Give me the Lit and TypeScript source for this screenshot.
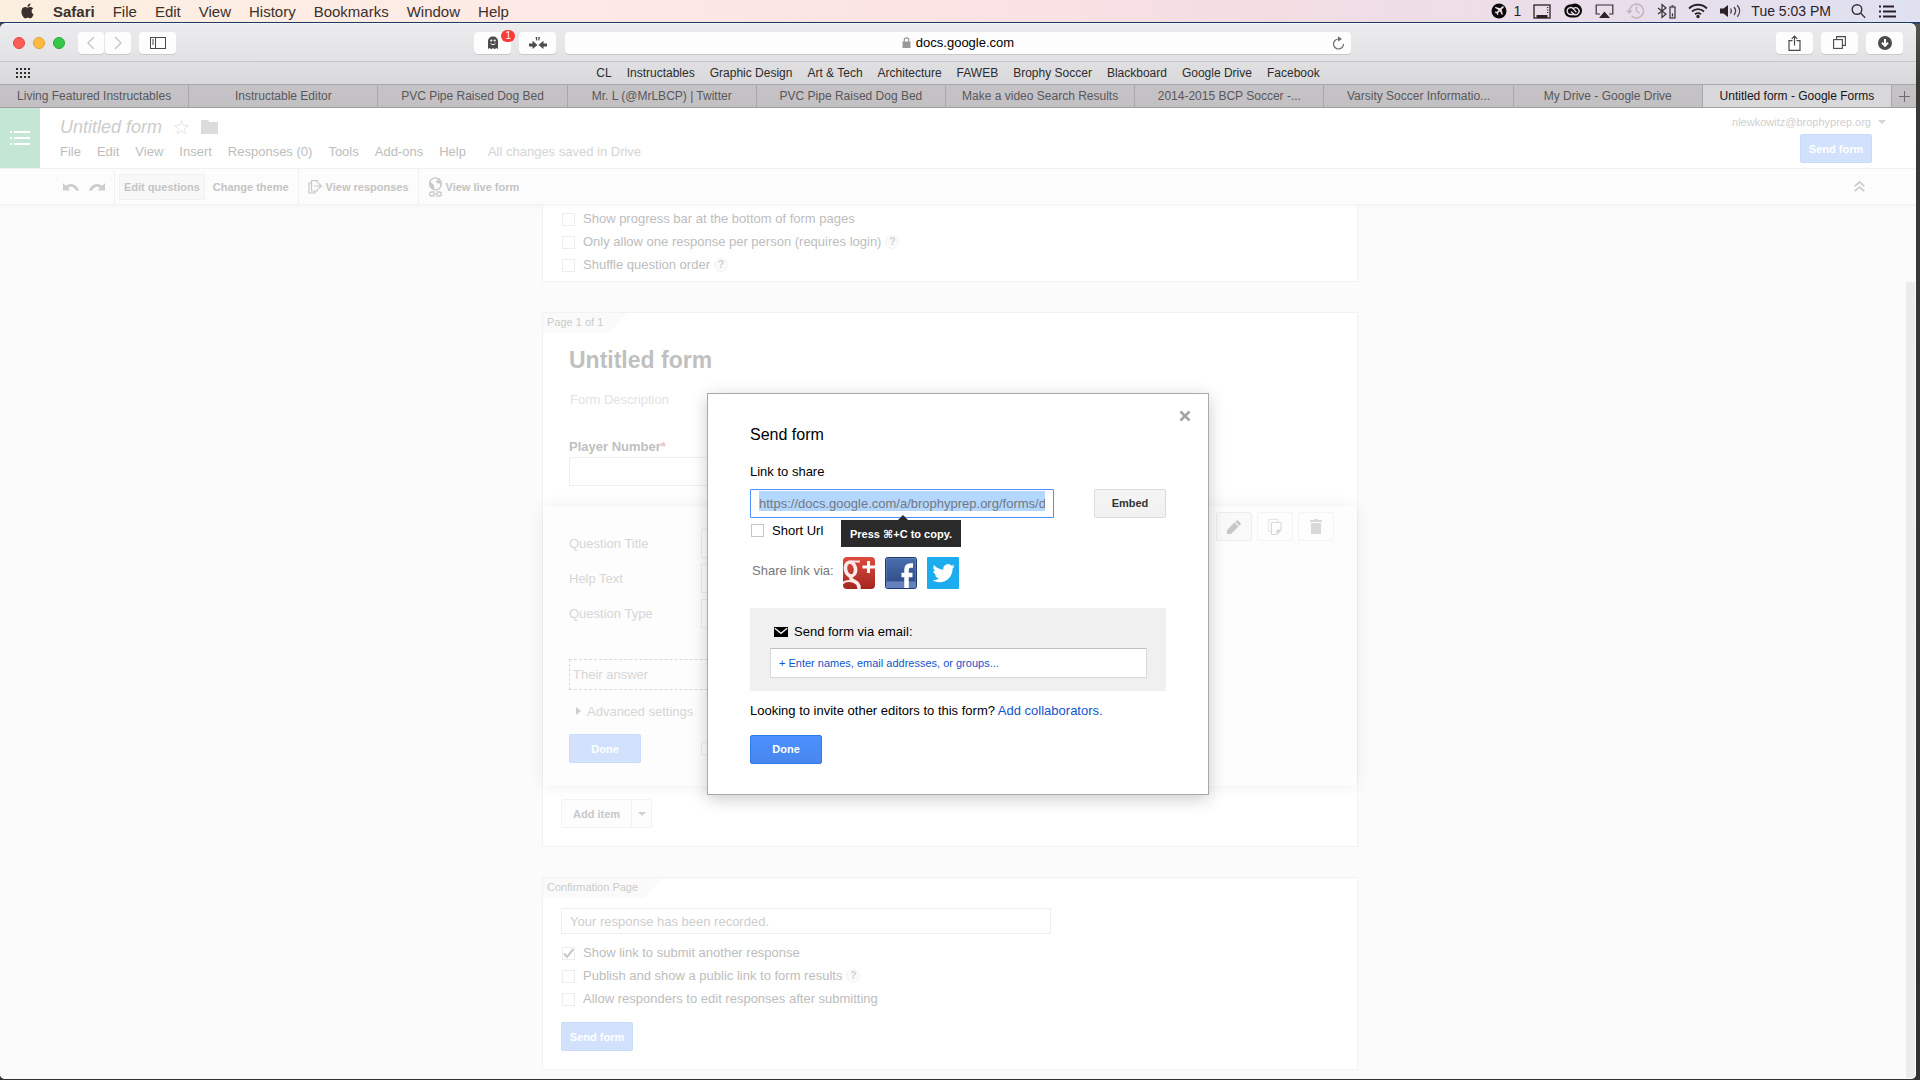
import { LitElement, html, css, svg } from "lit";
import { customElement, property } from "lit/decorators.js";
import { classMap } from "lit/directives/class-map.js";

const base = css`
  :host, * { box-sizing: border-box; }
  button, input, select {
    font: inherit;
    color: inherit;
    margin: 0;
    padding: 0;
    border: 0;
    border-radius: 0;
    background: none;
    outline: none;
    appearance: none;
    text-align: left;
  }
  a { color: inherit; text-decoration: none; }
  svg { display: block; flex: none; }
  h1, h2, p { margin: 0; font-weight: normal; }
`;

const formControls = css`
  .primary {
    width: 72px;
    height: 29px;
    border: 1px solid #c9dcfb;
    border-radius: 2px;
    background: #d2e2fd;
    color: #fff;
    font-size: 11px;
    font-weight: bold;
    text-align: center;
  }
  .check {
    flex: none;
    width: 13px;
    height: 13px;
    border: 1px solid #ededed;
    background: #fff;
  }
`;

/* macOS menu bar */
@customElement("menu-bar")
export class MenuBar extends LitElement {
  static styles = [base, css`
    :host {
      display: flex;
      align-items: center;
      justify-content: space-between;
      height: 22px;
      padding: 0 23px 0 20px;
      color: #3c302c;
      font-size: 15px;
      background: linear-gradient(90deg, #fbefdf 0%, #fdeae6 26%, #fbe2e4 52%, #f3dde3 66%, #eadeea 82%, #dfe1f1 100%);
    }
    .menus { display: flex; align-items: center; gap: 18px; }
    .name { font-weight: bold; }
    .status { display: flex; align-items: center; gap: 12px; font-size: 14px; color: #2d2228; }
    .count { display: flex; align-items: center; gap: 7px; }
    .clock { margin: 0 8px 0 -2px; }
  `];
  render() {
    return html`
      <nav class="menus">
        <svg width="15" height="17" viewBox="0 1 24 24" fill="currentColor"><path d="M12.152 6.896c-.948 0-2.415-1.078-3.96-1.04-2.04.027-3.91 1.183-4.961 3.014-2.117 3.675-.546 9.103 1.519 12.09 1.013 1.454 2.208 3.09 3.792 3.039 1.52-.065 2.09-.987 3.935-.987 1.831 0 2.35.987 3.96.948 1.637-.026 2.676-1.48 3.676-2.948 1.156-1.688 1.636-3.325 1.662-3.415-.039-.013-3.182-1.221-3.22-4.857-.026-3.04 2.48-4.494 2.597-4.559-1.429-2.09-3.623-2.324-4.39-2.376-2-.156-3.675 1.09-4.61 1.09zM15.53 3.83c.843-1.012 1.4-2.427 1.245-3.83-1.207.052-2.662.805-3.532 1.818-.78.896-1.454 2.338-1.273 3.714 1.338.104 2.715-.688 3.559-1.701"/></svg>
        <button class="name">Safari</button>
        ${["File", "Edit", "View", "History", "Bookmarks", "Window", "Help"].map((m) => html`<button>${m}</button>`)}
      </nav>
      <div class="status">
        <span class="count">
          <svg width="16" height="16" viewBox="0 0 16 16"><circle cx="8" cy="8" r="7.5" fill="#0d0a0c"/><path d="M12.6 3.4c-.5-.5-1.3-.2-1.8.3L9.3 5.2 4.6 4l-.9.8 3.9 2.1-1.7 1.8-1.6-.2-.8.7 2 1.1 1.1 2 .7-.8-.2-1.6 1.8-1.7 2.1 3.9.8-.9-1.2-4.7 1.5-1.5c.5-.5 1-1.1 .5-1.6z" fill="#f3e2e8"/></svg>
          <span>1</span>
        </span>
        <svg width="18" height="16" viewBox="0 0 18 16"><rect x="1" y="2" width="16" height="13" fill="none" stroke="#2b2126" stroke-width="1.3"/><rect x="3.5" y="12" width="11" height="3" fill="#2b2126"/><path d="M14 4.5h1.3M14 7h1.3M14 9.5h1.3" stroke="#2b2126"/></svg>
        <svg width="20" height="16" viewBox="0 0 20 16"><path d="M7.3 14.5A6.6 6.6 0 0 1 5.5 1.8 7 7 0 0 1 9 1.2a7 7 0 1 1 3.5 13.3z" fill="#0d0a0c"/><path d="M12.500 11.500H7.500a3.500 3.500 0 1 1 2.600-6l3.300 3.900M8 8.500l3 2.800a3.500 3.500 0 1 0-.6-5.800" fill="none" stroke="#f0e0e8" stroke-width="1.300"/></svg>
        <svg width="19" height="16" viewBox="0 0 19 16"><path d="M5 11H1.200V2h16.600v9H14" fill="none" stroke="#3a2f35" stroke-width="1.200"/><path d="M9.500 8.500 15 15H4z" fill="#2b2126"/></svg>
        <svg width="19" height="16" viewBox="0 0 19 16" fill="none" stroke="#c2b3bd" stroke-width="1.400"><path d="M3.500 8A7 7 0 1 1 5.600 13M10.500 3.500V8l3 2.200"/><path d="M0 7.500h6.500L3.300 11z" fill="#c2b3bd" stroke="none"/></svg>
        <svg width="19" height="16" viewBox="0 0 19 16" fill="none" stroke="#3a2f35" stroke-width="1.200"><path d="M1 5l8 6-4 3.500v-13L9 5l-8 6"/><rect x="13" y="4" width="5" height="11"/><path d="M14.500 2.800h2M15.500 10.500v3"/></svg>
        <svg width="20" height="16" viewBox="0 0 20 16" fill="none" stroke="#2b2126" stroke-width="1.800"><path d="M1 5.500c5-5 13-5 18 0M4 8.500c3.500-3.300 8.500-3.300 12 0M7 11.300c2-1.600 4-1.600 6 0"/><circle cx="10" cy="13.500" r=".8"/></svg>
        <svg width="21" height="16" viewBox="0 0 21 16"><path d="M0 5.500h3.500L8 2v12l-4.500-3.500H0z" fill="#2b2126"/><path d="M10.500 5.500c1 1.500 1 3.500 0 5M14 4c2 2.500 2 5.500 0 8M17.300 2.300c3 3.400 3 8 0 11.400" fill="none" stroke="#4b3f46" stroke-width="1.300"/></svg>
        <span class="clock">Tue 5:03 PM</span>
        <svg width="15" height="16" viewBox="0 0 15 16" fill="none" stroke="#3a3038" stroke-width="1.400"><circle cx="6" cy="6.500" r="4.800"/><path d="M9.500 10l4.700 4.800"/></svg>
        <svg width="19" height="16" viewBox="0 0 19 16" stroke="#2b2126" stroke-width="2"><path d="M1 3.500h2M1 8.500h2M1 13.500h2M5 3.500h11M5 8.500h13M5 13.500h13"/></svg>
      </div>`;
  }
}

/* Safari toolbar, favourites and tabs */
@customElement("browser-chrome")
export class BrowserChrome extends LitElement {
  static styles = [base, css`
    :host { display: block; color: #2c2c2c; font-size: 12px; }
    .bar {
      display: grid;
      grid-template-columns: 1fr 41% 1fr;
      align-items: center;
      height: 38px;
      background: linear-gradient(#ecebed, #e2e1e3);
      border-radius: 6px 6px 0 0;
      border-top: 1px solid #f4f4f5;
    }
    .side { display: flex; align-items: center; justify-content: space-between; padding: 0 9px 0 13px; }
    .side.end { justify-content: flex-end; gap: 8px; padding: 0 13px; }
    .set { display: flex; align-items: center; gap: 8px; }
    .lights { display: flex; gap: 8px; }
    .light { width: 12px; height: 12px; border-radius: 50%; border: 1px solid #e2463f; background: #fc5b57; }
    .light.amber { border-color: #dfa033; background: #fdbc40; }
    .light.green { border-color: #27aa35; background: #34c84a; }
    .pair { display: flex; gap: 1px; margin-left: 5px; }
    .key {
      display: grid;
      place-items: center;
      width: 37px;
      height: 22px;
      border-radius: 4px;
      background: #fdfdfd;
      box-shadow: 0 1px 0 #c9c8ca;
      position: relative;
    }
    .pair .key { width: 26px; }
    .badge {
      position: absolute;
      top: -2px;
      right: -4px;
      width: 14px;
      height: 12px;
      border-radius: 6px;
      background: #fc3a38;
      color: #fff;
      font-size: 10px;
      line-height: 12px;
      text-align: center;
    }
    .url {
      display: grid;
      grid-template-columns: 1fr auto 1fr;
      align-items: center;
      height: 22px;
      padding: 0 6px;
      border-radius: 4px;
      background: #fdfdfd;
      box-shadow: 0 1px 0 #c9c8ca;
      color: #000;
      font-size: 13px;
    }
    .address { display: flex; align-items: center; gap: 5px; grid-column: 2; }
    .reload { justify-self: end; }
    .favs {
      display: grid;
      grid-template-columns: 1fr auto 1fr;
      align-items: center;
      height: 23px;
      padding: 0 16px;
      border-top: 1px solid #c6c5c7;
      background: linear-gradient(#e0dfe1, #d9d8da);
    }
    .links { display: flex; gap: 15px; }
    .tabs {
      display: flex;
      height: 24px;
      border-top: 1px solid #a9a7aa;
      border-bottom: 1px solid #a09ea1;
      background: linear-gradient(#c5c3c6, #c2c0c3);
      color: #59575a;
    }
    .tab {
      flex: 1;
      min-width: 0;
      border-right: 1px solid #aaa8ab;
      line-height: 22px;
      text-align: center;
    }
    .tab.active { background: #d8d7d9; color: #161616; }
    .add { display: grid; place-items: center; width: 24px; }
  `];
  private tabs = ["Living Featured Instructables", "Instructable Editor", "PVC Pipe Raised Dog Bed", "Mr. L (@MrLBCP) | Twitter", "PVC Pipe Raised Dog Bed", "Make a video Search Results", "2014-2015 BCP Soccer -...", "Varsity Soccer Informatio...", "My Drive - Google Drive", "Untitled form - Google Forms"];
  private favs = ["CL", "Instructables", "Graphic Design", "Art & Tech", "Architecture", "FAWEB", "Brophy Soccer", "Blackboard", "Google Drive", "Facebook"];
  render() {
    return html`
      <div class="bar">
        <div class="side">
          <div class="set">
            <div class="lights">
              <button class="light" aria-label="Close"></button>
              <button class="light amber" aria-label="Minimize"></button>
              <button class="light green" aria-label="Zoom"></button>
            </div>
            <div class="pair">
              <button class="key" aria-label="Back"><svg width="8" height="14" viewBox="0 0 8 14" fill="none" stroke="#c9c9c9" stroke-width="1.500"><path d="M7 1 1 7l6 6"/></svg></button>
              <button class="key" aria-label="Forward"><svg width="8" height="14" viewBox="0 0 8 14" fill="none" stroke="#c9c9c9" stroke-width="1.500"><path d="M1 1l6 6-6 6"/></svg></button>
            </div>
            <button class="key" aria-label="Sidebar"><svg width="16" height="12" viewBox="0 0 16 12" fill="none" stroke="#4a4a4a"><rect x=".5" y=".5" width="15" height="11"/><path d="M5.500 1v10M2 3h2M2 5h2M2 7h2"/></svg></button>
          </div>
          <div class="set">
            <button class="key" aria-label="Ghostery">
              <svg width="12" height="14" viewBox="0 0 12 14"><path d="M1 13V5.500C1 2.500 3 .5 6 .5s5 2 5 5V13l-1.700-1-1.600 1.200L6 12l-1.700 1.200L2.700 12z" fill="#4c4c4c"/><circle cx="4.300" cy="4.500" r="1.100" fill="#fff"/><circle cx="7.700" cy="4.500" r="1.100" fill="#fff"/><path d="M3.500 7.200c1.500 1.900 3.500 1.900 5 0" fill="none" stroke="#fff"/></svg>
              <span class="badge">1</span>
            </button>
            <button class="key" aria-label="Pin"><svg width="18" height="12" viewBox="0 0 18 12" fill="#4c4c4c"><path d="M0 6.500h3.500V3.700L8.500 8l-5 4V9.500H0zM18 6.500h-3.500V3.700L9.500 8l5 4V9.500H18zM6.500 0h1.700v3.500H7.300zM9.300 0H11l-.8 3.500h-.9z"/></svg></button>
          </div>
        </div>
        <div class="url">
          <span class="address">
            <svg width="9" height="11" viewBox="0 0 9 11"><rect x=".5" y="4.500" width="8" height="6.500" fill="#999"/><path d="M2.300 5V3a2.200 2.200 0 0 1 4.400 0v2" fill="none" stroke="#999" stroke-width="1.200"/></svg>
            docs.google.com
          </span>
          <button class="reload" aria-label="Reload"><svg width="13" height="14" viewBox="0 0 13 14"><path d="M6.500 3A5 5 0 1 0 11.500 8" fill="none" stroke="#6b6b6b" stroke-width="1.200"/><path d="M6 .3v5.200l4-2.500z" fill="#6b6b6b"/></svg></button>
        </div>
        <div class="side end">
          <button class="key" aria-label="Share"><svg width="13" height="16" viewBox="0 0 13 16" fill="none" stroke="#4a4a4a" stroke-width="1.200"><path d="M4.500 5.600H1v9.800h11V5.600H8.500M6.500 10.500V1M3.700 3.800 6.500 1l2.800 2.800"/></svg></button>
          <button class="key" aria-label="Show all tabs"><svg width="13" height="13" viewBox="0 0 13 13" fill="none" stroke="#4a4a4a" stroke-width="1.100"><rect x=".6" y="3.600" width="8.800" height="8.800"/><path d="M3.600 3.500V.6h8.800v8.800H9.500"/></svg></button>
          <button class="key" aria-label="Downloads"><svg width="14" height="14" viewBox="0 0 14 14"><circle cx="7" cy="7" r="7" fill="#4c4c4c"/><path d="M7 3v6M4 6.700 7 9.900l3-3.200" fill="none" stroke="#fff" stroke-width="2"/></svg></button>
        </div>
      </div>
      <div class="favs">
        <svg width="14" height="11" viewBox="0 0 14 11" fill="#2c2c2c">${[0, 4, 8, 12].map((x) => [0, 4, 8].map((y) => svg`<rect x=${x} y=${y} width="2" height="2"/>`))}</svg>
        <nav class="links">${this.favs.map((f) => html`<a href="#">${f}</a>`)}</nav>
      </div>
      <nav class="tabs">
        ${this.tabs.map((t, i) => html`<a href="#" class=${classMap({ tab: true, active: i === 9 })}>${t}</a>`)}
        <button class="add" aria-label="New tab"><svg width="11" height="11" viewBox="0 0 11 11" stroke="#6c6a6d"><path d="M5.500 0v11M0 5.500h11"/></svg></button>
      </nav>`;
  }
}

/* Google Forms title, menus and toolbar */
@customElement("forms-header")
export class FormsHeader extends LitElement {
  static styles = [base, formControls, css`
    :host { display: block; font-size: 13px; color: #bdbdbd; }
    .top { display: flex; height: 61px; background: #fff; border-bottom: 1px solid #f2f2f2; }
    .home { display: grid; place-items: center; width: 40px; height: 60px; background: #c3e7d4; }
    .main { flex: 1; padding: 7px 0 0 20px; }
    .title { display: flex; align-items: center; gap: 11px; height: 24px; }
    .title h1 { font-size: 18px; font-style: italic; color: #ccc; }
    .menus { display: flex; gap: 16px; line-height: 20px; padding-top: 3px; }
    .saved { color: #d4d4d4; margin-left: 6px; }
    .account { display: flex; flex-direction: column; align-items: flex-end; gap: 4px; padding: 6px 30px 0 0; }
    .user { display: flex; align-items: center; gap: 7px; font-size: 11px; line-height: 16px; color: #cfcfcf; }
    .account .primary { margin-right: 14px; }
    .tools {
      display: flex;
      height: 36px;
      background: #fcfcfc;
      border-bottom: 1px solid #f2f2f2;
      box-shadow: 0 1px 4px rgba(0, 0, 0, 0.04);
      position: relative;
      font-size: 11px;
      font-weight: bold;
      color: #c4c4c4;
    }
    .group { display: flex; align-items: center; padding: 0 9px; border-left: 1px solid #f1f1f1; }
    .group.history { gap: 10px; padding: 0 9px 0 63px; border: 0; }
    .group.edit { padding: 0 9px 0 4px; gap: 8px; }
    .tool { display: flex; align-items: center; gap: 3px; height: 26px; }
    .tool.on { padding: 0 4px; border: 1px solid #f1f1f1; background: #f8f8f8; }
    .fold { margin: auto 51px auto auto; }
  `];
  render() {
    return html`
      <header class="top">
        <a class="home" href="#" aria-label="Forms home"><svg width="22" height="16" viewBox="0 0 22 16" stroke="#fff" stroke-width="2"><path d="M1 2h2M1 8h2M1 14h2M5 2h16M5 8h16M5 14h16"/></svg></a>
        <div class="main">
          <div class="title">
            <h1>Untitled form</h1>
            <svg width="17" height="16" viewBox="0 0 17 16" fill="none" stroke="#e6e6e6"><path d="M8.500 1.500l1.800 4.800 5.200.2-4.100 3.200 1.500 5-4.400-2.900-4.400 2.900 1.500-5L1.500 6.500l5.200-.2z"/></svg>
            <svg width="17" height="14" viewBox="0 0 17 14" fill="#dcdcdc"><path d="M0 1.500Q0 0 1.500 0H7l1.500 2H17v12H0z"/></svg>
          </div>
          <nav class="menus">
            ${["File", "Edit", "View", "Insert", "Responses (0)", "Tools", "Add-ons", "Help"].map((m) => html`<button>${m}</button>`)}
            <span class="saved">All changes saved in Drive</span>
          </nav>
        </div>
        <div class="account">
          <button class="user">nlewkowitz@brophyprep.org<svg width="8" height="4" viewBox="0 0 8 4" fill="#d4d4d4"><path d="M0 0h8L4 4z"/></svg></button>
          <button class="primary">Send form</button>
        </div>
      </header>
      <div class="tools">
        <div class="group history">
          <button aria-label="Undo"><svg width="16" height="10" viewBox="0 0 16 10" fill="#cdcdcd"><path d="M0 1v7.500h7.500L5 6c2.500-2 6-1.500 8 2.800h3C14 1.500 7 .5 2.700 3.700z"/></svg></button>
          <button aria-label="Redo"><svg width="16" height="10" viewBox="0 0 16 10" fill="#cdcdcd"><path d="M16 1v7.500H8.500L11 6C8.500 4 5 4.500 3 8.800H0C2 1.500 9 .5 13.300 3.700z"/></svg></button>
        </div>
        <div class="group edit">
          <button class="tool on">Edit questions</button>
          <button class="tool">Change theme</button>
        </div>
        <div class="group">
          <button class="tool"><svg width="15" height="14" viewBox="0 0 15 14" fill="none" stroke="#c8c8c8" stroke-width="1.200"><path d="M9.300 3.200V.7H3.500V11h5.800V8.700M3 3H1v10h6v-2M5.500 6h8M10.500 3.300 13.300 6l-2.800 2.700"/></svg>View responses</button>
        </div>
        <div class="group">
          <button class="tool"><svg width="15" height="20" viewBox="0 0 15 20" fill="none" stroke="#c8c8c8" stroke-width="1.300"><circle cx="7.500" cy="6.800" r="6"/><path d="M2 4.500l3.500 3 1 2.500-.5 2.500C3 12 1.500 9 2 4.500zM6 1l3 .5 1 1.500L7.500 5l1.500 1 2.500.5 1 2.500C14 6 12 1 6 1z" fill="#c8c8c8" stroke="none"/><path d="M6.500 15H3.600a2 2 0 0 0 0 4h2.900M8.500 15h2.900a2 2 0 0 1 0 4H8.500M5 17h5"/></svg>View live form</button>
        </div>
        <button class="fold" aria-label="Hide menus"><svg width="11" height="11" viewBox="0 0 11 11" fill="none" stroke="#c4c4c4" stroke-width="1.500"><path d="M.7 5.300l4.800-4.300 4.800 4.300M.7 10.300l4.800-4.300 4.800 4.300"/></svg></button>
      </div>`;
  }
}

/* Tick box with its label and an optional help mark */
@customElement("option-row")
export class OptionRow extends LitElement {
  @property() label = "";
  @property({ type: Boolean }) help = false;
  @property({ type: Boolean }) checked = false;
  static styles = [base, formControls, css`
    :host { display: flex; align-items: center; gap: 4px; height: 23px; }
    .row { display: flex; align-items: center; gap: 8px; }
    .check:checked { background: #fff url("data:image/svg+xml,%3Csvg xmlns='http://www.w3.org/2000/svg' viewBox='0 0 11 11'%3E%3Cpath d='M1 5.500 4 9 10.500 1' fill='none' stroke='%23c8c8c8' stroke-width='2'/%3E%3C/svg%3E"); }
    .check { margin-top: 1px; }
    .mark {
      width: 14px;
      height: 14px;
      border-radius: 50%;
      border: 1px solid #f3f3f3;
      background: #fafafa;
      color: #d0d0d0;
      font-size: 10px;
      font-weight: bold;
      line-height: 12px;
      text-align: center;
    }
  `];
  render() {
    return html`
      <label class="row"><input class="check" type="checkbox" .checked=${this.checked} />${this.label}</label>
      ${this.help ? html`<button class="mark" aria-label="Help">?</button>` : ""}`;
  }
}

/* Form being edited */
@customElement("form-editor")
export class FormEditor extends LitElement {
  static styles = [base, formControls, css`
    :host { display: flex; min-height: 0; font-size: 13px; color: #bdbdbd; background: #fbfbfb; }
    .sheet { flex: 1; display: flex; flex-direction: column; align-items: center; gap: 30px; min-height: 0; overflow: hidden; }
    .card { flex: none; width: 100%; max-width: 816px; border: 1px solid #f2f2f2; background: #fff; }
    .card.settings { border-top: 0; padding: 2px 19px 5px; }
    .flag {
      width: fit-content;
      height: 20px;
      padding: 0 24px 0 4px;
      background: #fafafa;
      clip-path: polygon(0 0, 100% 0, calc(100% - 18px) 100%, 0 100%);
      font-size: 11px;
      line-height: 19px;
      color: #cbcbcb;
    }
    .intro { padding: 13px 26px 20px; }
    .intro h2 { font-size: 23px; line-height: 28px; font-weight: bold; color: #c0c0c0; }
    .desc { padding: 16px 1px 27px; line-height: 20px; color: #e3e3e3; }
    .name { display: block; line-height: 20px; font-weight: bold; color: #c0c0c0; }
    .star { color: #f3c4c0; }
    .text { display: block; width: 400px; height: 29px; padding: 0 8px; border: 1px solid #efefef; background: #fff; }
    .question {
      display: flex;
      justify-content: space-between;
      background: #fdfdfd;
      box-shadow: 0 0 14px rgba(0, 0, 0, 0.07);
      color: #d6d6d6;
    }
    .fields { flex: 1; padding: 23px 26px; }
    .rows { display: grid; grid-template-columns: 132px 1fr; gap: 6px 0; align-items: center; }
    .answer { width: 400px; height: 31px; margin: 31px 0 11px; padding: 0 3px; border: 1px dashed #d9d9d9; line-height: 29px; }
    .advanced { display: flex; align-items: center; gap: 6px; height: 20px; padding-left: 7px; }
    .finish { display: grid; grid-template-columns: 132px 1fr; align-items: center; margin-top: 13px; }
    .actions { display: flex; gap: 5px; margin: 6px 23px 0 0; }
    .action { display: grid; place-items: center; width: 36px; height: 29px; border: 1px solid #f4f4f4; border-radius: 2px; }
    .action.on { border-color: #ededed; background: #f9f9f9; }
    .adder { display: flex; width: fit-content; margin: 13px 18px 18px; border: 1px solid #f2f2f2; border-radius: 2px; background: #fdfdfd; }
    .adder button { display: grid; place-items: center; height: 27px; padding: 0 11px; font-size: 11px; font-weight: bold; color: #c8c8c8; }
    .adder .more { width: 20px; padding: 0; border-left: 1px solid #f2f2f2; }
    .confirm { padding: 10px 18px 18px; }
    .confirm option-row { padding-left: 1px; }
    .confirm .text { width: 490px; height: 26px; margin-bottom: 7px; color: #cecece; }
    .confirm .primary { margin-top: 12px; }
    .scroll { display: flex; flex-direction: column; width: 16px; padding: 0 1px 1px 6px; }
    .gap { flex: 77; }
    .thumb { flex: 797; background: #ececec; }
  `];
  render() {
    return html`
      <main class="sheet">
        <section class="card settings">
          <option-row label="Show progress bar at the bottom of form pages"></option-row>
          <option-row label="Only allow one response per person (requires login)" help></option-row>
          <option-row label="Shuffle question order" help></option-row>
        </section>
        <section class="card">
          <div class="flag">Page 1 of 1</div>
          <div class="intro">
            <h2>Untitled form</h2>
            <p class="desc">Form Description</p>
            <label class="name" for="player">Player Number<span class="star">*</span></label>
            <input class="text" id="player" type="text" />
          </div>
          <div class="question">
            <div class="fields">
              <div class="rows">
                <label for="qtitle">Question Title</label><input class="text" id="qtitle" type="text" />
                <label for="qhelp">Help Text</label><input class="text" id="qhelp" type="text" />
                <label for="qtype">Question Type</label><select class="text" id="qtype"></select>
              </div>
              <div class="answer">Their answer</div>
              <button class="advanced"><svg width="5" height="8" viewBox="0 0 5 8" fill="#cfcfcf"><path d="M0 0l5 4-5 4z"/></svg>Advanced settings</button>
              <div class="finish"><button class="primary">Done</button><input class="check" type="checkbox" aria-label="Required question" /></div>
            </div>
            <div class="actions">
              <button class="action on" aria-label="Edit"><svg width="14" height="14" viewBox="0 0 14 14" fill="#c8c8c8"><path d="M0 14v-4l7.500-7.500 4 4L4 14zM8.300 1.700l1-1q1-1 2 0L13.300 2.700q1 1 0 2l-1 1z"/></svg></button>
              <button class="action" aria-label="Duplicate"><svg width="14" height="16" viewBox="0 0 14 16" fill="none" stroke="#d8d8d8"><path d="M3 12.500H.8V.5h9V3" stroke="#e4e4e4"/><path d="M3.500 3.500h9.500v7.500L9 15.500H3.500z"/><path d="M13 11H9v4.500z" fill="#d8d8d8"/></svg></button>
              <button class="action" aria-label="Delete"><svg width="12" height="15" viewBox="0 0 12 15" fill="#d9d9d9"><path d="M0 1h4V0h4v1h4v2H0zM1 4h10v11H1z"/></svg></button>
            </div>
          </div>
          <div class="adder">
            <button>Add item</button>
            <button class="more" aria-label="More item types"><svg width="8" height="4" viewBox="0 0 8 4" fill="#cfcfcf"><path d="M0 0h8L4 4z"/></svg></button>
          </div>
        </section>
        <section class="card">
          <div class="flag">Confirmation Page</div>
          <div class="confirm">
            <input class="text" type="text" aria-label="Confirmation message" value="Your response has been recorded." />
            <option-row label="Show link to submit another response" checked></option-row>
            <option-row label="Publish and show a public link to form results" help></option-row>
            <option-row label="Allow responders to edit responses after submitting"></option-row>
            <button class="primary">Send form</button>
          </div>
        </section>
      </main>
      <div class="scroll"><div class="gap"></div><div class="thumb"></div></div>`;
  }
}

/* "Send form" dialog */
@customElement("send-dialog")
export class SendDialog extends LitElement {
  static styles = [base, formControls, css`
    :host {
      display: block;
      position: relative;
      width: 502px;
      padding: 31px 42px 30px;
      border: 1px solid #a9a9a9;
      background: #fff;
      box-shadow: 0 4px 16px rgba(0, 0, 0, 0.2);
      color: #000;
      font-size: 13px;
    }
    h2 { font-size: 16px; line-height: 20px; }
    .close { position: absolute; top: 14px; right: 15px; display: grid; place-items: center; width: 16px; height: 16px; }
    .caption { display: block; line-height: 18px; margin: 18px 0 8px; }
    .share { display: flex; justify-content: space-between; }
    .field { position: relative; }
    .link {
      display: block;
      width: 304px;
      height: 29px;
      padding: 0 8px;
      border: 1px solid #4d90fe;
      border-radius: 1px;
      background: #fff linear-gradient(#b3d7ff, #b3d7ff) no-repeat 8px 1px / 286px 20px;
      color: #737780;
    }
    .embed {
      width: 72px;
      height: 29px;
      border: 1px solid #dcdcdc;
      border-radius: 2px;
      background: linear-gradient(#f5f5f5, #f1f1f1);
      color: #333;
      font-size: 11px;
      font-weight: bold;
      text-align: center;
    }
    .tip {
      position: absolute;
      top: 31px;
      left: 91px;
      width: 120px;
      height: 27px;
      background: #2a2a2a;
      color: #fff;
      font-size: 11px;
      font-weight: bold;
      line-height: 28px;
      text-align: center;
      white-space: nowrap;
    }
    .tip::before {
      content: "";
      position: absolute;
      top: -5px;
      left: 57px;
      border: 5px solid transparent;
      border-top: 0;
      border-bottom-color: #2a2a2a;
    }
    .short { display: flex; align-items: center; gap: 8px; width: fit-content; height: 20px; margin: 3px 0 16px; padding-left: 1px; }
    .short .check { border-color: #c6c6c6; }
    .via { display: flex; align-items: center; padding-left: 2px; color: #777; }
    .icons { display: flex; gap: 10px; margin-left: 9px; }
    .via-label { line-height: 18px; margin-bottom: 3px; }
    .mail { margin-top: 19px; padding: 14px 19px 13px 20px; background: #f0f0f0; }
    .mail-label { display: flex; align-items: center; gap: 6px; height: 20px; margin-bottom: 6px; padding-left: 4px; }
    .to { display: block; width: 100%; height: 30px; padding: 0 8px; border: 1px solid #d9d9d9; border-top-color: #c0c0c0; background: #fff; font-size: 11px; }
    .to::placeholder { color: #15c; opacity: 1; }
    .invite { line-height: 20px; margin: 10px 0 14px; }
    .invite a { color: #15c; }
    .blue { border-color: #3079ed; background: linear-gradient(#4d90fe, #4787ed); }
  `];
  render() {
    return html`
      <button class="close" aria-label="Close"><svg width="12" height="12" viewBox="0 0 12 12" stroke="#a3a3a3" stroke-width="2.500"><path d="M1.500 1.500l9 9M10.500 1.500l-9 9"/></svg></button>
      <h2>Send form</h2>
      <label class="caption" for="link">Link to share</label>
      <div class="share">
        <div class="field">
          <input class="link" id="link" type="text" readonly value="https://docs.google.com/a/brophyprep.org/forms/d" />
          <div class="tip" role="tooltip">Press ⌘+C to copy.</div>
        </div>
        <button class="embed">Embed</button>
      </div>
      <label class="short"><input class="check" type="checkbox" />Short Url</label>
      <div class="via">
        <span class="via-label">Share link via:</span>
        <div class="icons">
          <a href="#" aria-label="Google+"><svg width="32" height="32" viewBox="0 0 32 32">
            <defs><linearGradient id="r" x2="0" y2="1"><stop stop-color="#dd4b3e"/><stop offset="1" stop-color="#a3261f"/></linearGradient><clipPath id="rc"><rect width="32" height="32" rx="4"/></clipPath></defs>
            <g clip-path="url(#rc)"><rect width="32" height="32" fill="url(#r)"/>
            <g fill="none" stroke="#fbeae8"><ellipse cx="7.500" cy="12" rx="5" ry="7" stroke-width="3.600" transform="rotate(-12 7.500 12)"/><path d="M8 4.500h9" stroke-width="1.800"/><path d="M9 19c-3 3 0 3.500 3 5.500 4 2.500 5 5 3.500 9" stroke-width="3.400"/><path d="M-1 27c3-3.500 8-3.500 13-1.500" stroke-width="2"/></g>
            <path d="M24 4h3v4.500h5v3h-5V16h-3v-4.500h-4.500v-3H24z" fill="#fff"/></g></svg></a>
          <a href="#" aria-label="Facebook"><svg width="32" height="32" viewBox="0 0 32 32">
            <defs><linearGradient id="b" x2="0" y2="1"><stop stop-color="#4a6fae"/><stop offset="1" stop-color="#2b4683"/></linearGradient></defs>
            <rect x=".5" y=".5" width="31" height="31" rx="2" fill="url(#b)" stroke="#1f3870"/><rect x="1.500" y="1.500" width="29" height="23" fill="none" stroke="#6585bd" stroke-opacity=".6"/><rect x="1" y="25" width="30" height="6" fill="#6480bd"/>
            <path d="M28 8.500h-2.500Q21.500 8.500 21.500 13v18M16.500 18H27.500" fill="none" stroke="#fff" stroke-width="4.500"/></svg></a>
          <a href="#" aria-label="Twitter"><svg width="32" height="32" viewBox="0 0 32 32"><rect width="32" height="32" rx="1" fill="#1daced"/><path transform="translate(5.500 5) scale(.93)" fill="#fff" d="M23.953 4.570a10 10 0 0 1-2.825.775 4.958 4.958 0 0 0 2.163-2.723c-.951.555-2.005.959-3.127 1.184a4.920 4.920 0 0 0-8.384 4.482C7.690 8.095 4.067 6.130 1.640 3.162a4.822 4.822 0 0 0-.666 2.475c0 1.710.870 3.213 2.188 4.096a4.904 4.904 0 0 1-2.228-.616v.06a4.923 4.923 0 0 0 3.946 4.827 4.996 4.996 0 0 1-2.212.085 4.936 4.936 0 0 0 4.604 3.417 9.867 9.867 0 0 1-6.102 2.105c-.390 0-.779-.023-1.170-.067a13.995 13.995 0 0 0 7.557 2.209c9.053 0 13.998-7.496 13.998-13.985 0-.210 0-.420-.015-.630A9.935 9.935 0 0 0 24 4.590z"/></svg></a>
        </div>
      </div>
      <div class="mail">
        <label class="mail-label" for="to"><svg width="14" height="10" viewBox="0 0 14 10"><rect width="14" height="10"/><path d="M.8 1.300 7 6.300l6.200-5" fill="none" stroke="#f0f0f0" stroke-width="1.400"/></svg>Send form via email:</label>
        <input class="to" id="to" type="text" placeholder="+ Enter names, email addresses, or groups..." />
      </div>
      <p class="invite">Looking to invite other editors to this form? <a href="#">Add collaborators.</a></p>
      <button class="primary blue">Done</button>`;
  }
}

@customElement("app-root")
export class AppRoot extends LitElement {
  static styles = css`
    :host {
      display: flex;
      flex-direction: column;
      height: 100vh;
      overflow: hidden;
      font-family: "Liberation Sans", "DejaVu Sans", sans-serif;
      background: linear-gradient(#1d3a66 0, #1d3a66 23px, #55524f 24px, #3a3936 80px, #33322f 100%);
    }
    .window {
      flex: 1;
      display: flex;
      flex-direction: column;
      min-height: 0;
      margin: 1px 4px 1px 0;
      border-radius: 6px 6px 5px 5px;
      overflow: hidden;
      background: #fff;
    }
    .page { flex: 1; display: flex; flex-direction: column; min-height: 0; position: relative; }
    .editor { flex: 1; }
    .overlay { position: absolute; inset: 0; display: grid; place-items: center; }
  `;
  render() {
    return html`
      <menu-bar></menu-bar>
      <div class="window">
        <browser-chrome></browser-chrome>
        <div class="page">
          <forms-header></forms-header>
          <form-editor class="editor"></form-editor>
          <div class="overlay"><send-dialog role="dialog"></send-dialog></div>
        </div>
      </div>`;
  }
}
